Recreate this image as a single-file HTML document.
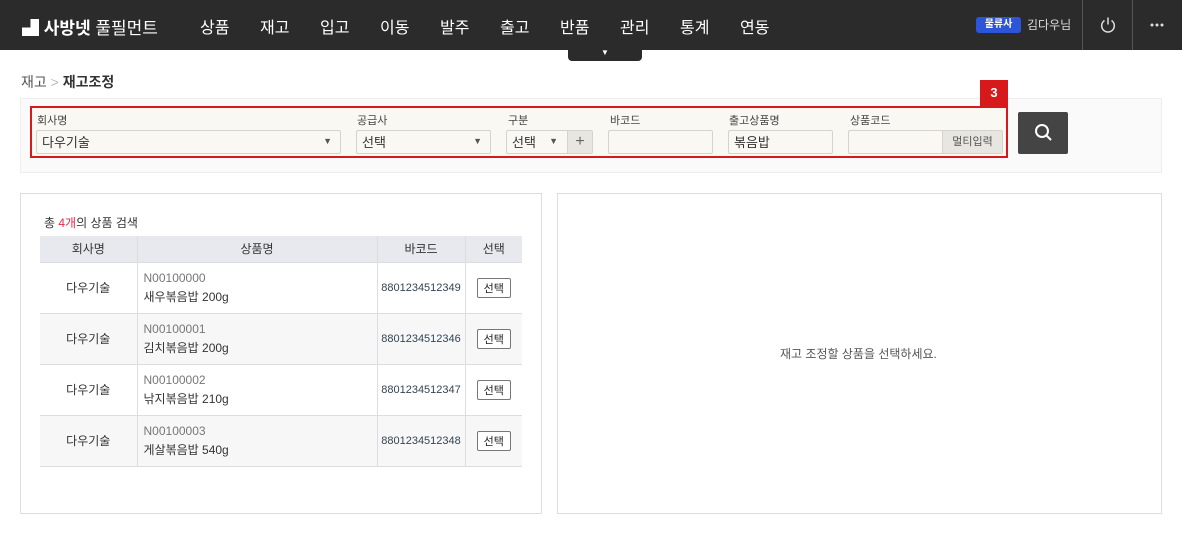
<!DOCTYPE html><html><head><meta charset="utf-8"><style>
*{box-sizing:border-box;margin:0;padding:0}
body{width:1182px;height:536px;background:#fff;font-family:"Liberation Sans","Noto Sans CJK KR",sans-serif;color:#333;position:relative;overflow:hidden;font-size:12px}
.a{position:absolute}
.hd{left:0;top:0;width:1182px;height:50px;background:#2b2b2b}
.nav{color:#fff;font-size:16px;top:14px}
.lbl{font-size:11px;color:#444;top:112px}
.inp{top:130px;height:24px;border:1px solid #d6d3cc;background:#faf8f3;border-radius:2px;font-size:13px;padding:1px 5px;color:#333}
.arr{position:absolute;right:8px;top:5px;font-size:9px;color:#555}
td,th{border:1px solid #ddd;font-weight:normal;font-size:12px;text-align:center}
th{background:#e8e9ee;height:26px;border-top:none}
td{height:51px}
tr.g td{background:#f7f7f7}
.btn{display:inline-block;border:1px solid #777;border-radius:2px;padding:1px 6px;font-size:11px;background:#fff;color:#222}
</style></head><body>
<div class="a hd"></div>
<div class="a" style="left:22px;top:14px;color:#fff;font-size:17px;font-weight:bold">▟ 사방넷 <span style="font-weight:normal">풀필먼트</span></div>
<div class="a nav" style="left:200px">상품</div><div class="a nav" style="left:260px">재고</div><div class="a nav" style="left:320px">입고</div><div class="a nav" style="left:380px">이동</div><div class="a nav" style="left:440px">발주</div><div class="a nav" style="left:500px">출고</div><div class="a nav" style="left:560px">반품</div><div class="a nav" style="left:620px">관리</div><div class="a nav" style="left:680px">통계</div><div class="a nav" style="left:740px">연동</div>
<div class="a" style="left:568px;top:50px;width:74px;height:11px;background:#2b2b2b;border-radius:0 0 4px 4px;color:#fff;font-size:8px;text-align:center;line-height:6px">▼</div>
<div class="a" style="left:976px;top:17px;width:45px;height:16px;background:#2d55d8;border-radius:3px;color:#fff;font-size:10px;font-weight:bold;text-align:center;line-height:16px">물류사</div>
<div class="a" style="left:1027px;top:16px;color:#ddd;font-size:12px">김다우님</div>
<div class="a" style="left:1082px;top:0;width:1px;height:50px;background:#555"></div>
<div class="a" style="left:1132px;top:0;width:1px;height:50px;background:#555"></div>
<svg class="a" style="left:1099px;top:16px" width="18" height="18" viewBox="0 0 18 18"><path d="M5.5 4.5A6.3 6.3 0 1 0 12.5 4.5M9 1.5V8.5" fill="none" stroke="#ddd" stroke-width="1.5"/></svg>
<svg class="a" style="left:1150px;top:23px" width="16" height="4" viewBox="0 0 16 4"><circle cx="2" cy="2" r="1.5" fill="#ddd"/><circle cx="7" cy="2" r="1.5" fill="#ddd"/><circle cx="12" cy="2" r="1.5" fill="#ddd"/></svg>
<div class="a" style="left:21px;top:72px;font-size:14px;color:#555">재고 <span style="color:#bbb;font-weight:lighter">&gt;</span> <b style="color:#333">재고조정</b></div>
<div class="a" style="left:20px;top:98px;width:1142px;height:75px;background:#fafafa;border:1px solid #eee"></div>
<div class="a" style="left:30px;top:106px;width:978px;height:52px;border:2px solid #d7191c;background:#faf8f3"></div>
<div class="a" style="left:980px;top:80px;width:28px;height:26px;background:#d7191c;color:#fff;font-weight:bold;font-size:13px;text-align:center;line-height:26px">3</div>
<div class="a lbl" style="left:37px">회사명</div><div class="a inp" style="left:36px;width:305px">다우기술<span class="arr">▼</span></div>
<div class="a lbl" style="left:357px">공급사</div><div class="a inp" style="left:356px;width:135px">선택<span class="arr">▼</span></div>
<div class="a lbl" style="left:508px">구분</div><div class="a inp" style="left:506px;width:87px">선택<span class="arr" style="right:34px">▼</span><span style="position:absolute;right:0;top:0;width:25px;height:22px;background:#e8e6e0;border-left:1px solid #d6d3cc;text-align:center;font-size:16px;line-height:22px;color:#666">+</span></div>
<div class="a lbl" style="left:610px">바코드</div><div class="a inp" style="left:608px;width:105px"></div>
<div class="a lbl" style="left:729px">출고상품명</div><div class="a inp" style="left:728px;width:105px">볶음밥</div>
<div class="a lbl" style="left:850px">상품코드</div><div class="a inp" style="left:848px;width:155px"><span style="position:absolute;right:0;top:0;width:60px;height:22px;background:#e8e6e0;border-left:1px solid #d6d3cc;text-align:center;font-size:11px;line-height:22px;color:#555">멀티입력</span></div>
<div class="a" style="left:1018px;top:112px;width:50px;height:42px;background:#444;border-radius:2px"></div>
<svg class="a" style="left:1034px;top:123px" width="20" height="20" viewBox="0 0 20 20"><circle cx="8" cy="8" r="6" fill="none" stroke="#fff" stroke-width="2"/><path d="M12.5 12.5L17 17" stroke="#fff" stroke-width="2"/></svg>
<div class="a" style="left:20px;top:193px;width:522px;height:321px;border:1px solid #ddd"></div>
<div class="a" style="left:557px;top:193px;width:605px;height:321px;border:1px solid #ddd"></div>
<div class="a" style="left:780px;top:345px;font-size:12px;color:#555">재고 조정할 상품을 선택하세요.</div>
<div class="a" style="left:44px;top:214px;font-size:12px;color:#333">총 <span style="color:#e02a4a">4개</span>의 상품 검색</div>
<table class="a" style="left:40px;top:236px;width:482px;border-collapse:collapse;border-left:none">
<tr><th style="width:97px;border-left:none">회사명</th><th style="width:240px">상품명</th><th style="width:88px">바코드</th><th style="border-right:none">선택</th></tr>
<tr><td style="border-left:none">다우기술</td><td style="text-align:left;padding-left:6px;line-height:19px"><span style="color:#777">N00100000</span><br>새우볶음밥 200g</td><td style="font-size:11px;color:#345">8801234512349</td><td style="border-right:none"><span class="btn">선택</span></td></tr>
<tr class="g"><td style="border-left:none">다우기술</td><td style="text-align:left;padding-left:6px;line-height:19px"><span style="color:#777">N00100001</span><br>김치볶음밥 200g</td><td style="font-size:11px;color:#345">8801234512346</td><td style="border-right:none"><span class="btn">선택</span></td></tr>
<tr><td style="border-left:none">다우기술</td><td style="text-align:left;padding-left:6px;line-height:19px"><span style="color:#777">N00100002</span><br>낚지볶음밥 210g</td><td style="font-size:11px;color:#345">8801234512347</td><td style="border-right:none"><span class="btn">선택</span></td></tr>
<tr class="g"><td style="border-left:none">다우기술</td><td style="text-align:left;padding-left:6px;line-height:19px"><span style="color:#777">N00100003</span><br>게살볶음밥 540g</td><td style="font-size:11px;color:#345">8801234512348</td><td style="border-right:none"><span class="btn">선택</span></td></tr>
</table>
</body></html>
